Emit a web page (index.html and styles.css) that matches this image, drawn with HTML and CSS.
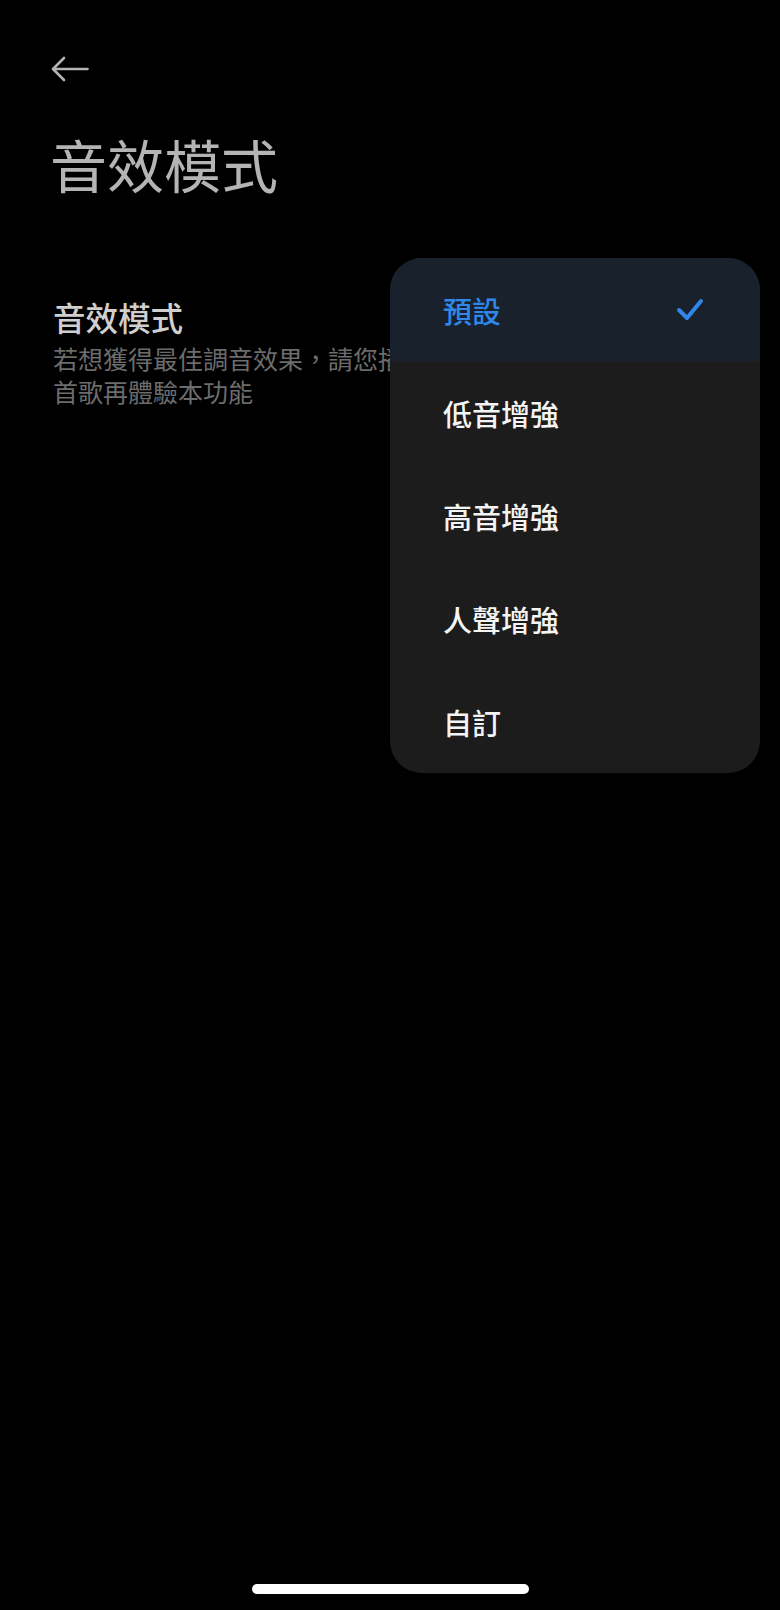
FILE: index.html
```html
<!DOCTYPE html>
<html lang="zh-Hant">
<head>
    <meta charset="UTF-8">
    <meta name="viewport" content="width=device-width, initial-scale=1.0">
    <title>音效模式</title>
    <link rel="stylesheet" href="styles.css">
</head>
<body>
    <div class="screen">
        <div class="top-bar">
            <button class="back-btn" aria-label="返回">
                <svg width="38" height="26" viewBox="0 0 38 26" fill="none" stroke="#b3b3b3" stroke-width="2.6" stroke-linecap="round" stroke-linejoin="round">
                    <path d="M36.5 13H2M13 2L2 13l11 11"/>
                </svg>
            </button>
        </div>
        <h1 class="page-title">音效模式</h1>

        <div class="setting-item">
            <div class="setting-name">音效模式</div>
            <div class="setting-desc">若想獲得最佳調音效果，請您播放一首歌再體驗本功能</div>
        </div>

        <ul class="dropdown">
            <li class="option selected">
                <span>預設</span>
                <svg width="28" height="23" viewBox="0 0 28 23" fill="none" stroke="#2f87ea" stroke-width="4" stroke-linecap="round" stroke-linejoin="round">
                    <path d="M3 12l8 8L25 3"/>
                </svg>
            </li>
            <li class="option"><span>低音增強</span></li>
            <li class="option"><span>高音增強</span></li>
            <li class="option"><span>人聲增強</span></li>
            <li class="option"><span>自訂</span></li>
        </ul>

        <div class="home-indicator"></div>
    </div>
</body>
</html>
```

FILE: styles.css
```css
* {
    box-sizing: border-box;
}
body {
    margin: 0;
    background: #000;
    font-family: "Noto Sans CJK TC", "Noto Sans", sans-serif;
}
.screen {
    position: relative;
    width: 780px;
    height: 1610px;
    display: flex;
    flex-direction: column;
    overflow: hidden;
}
.top-bar {
    padding: 56px 0 0 51px;
    height: 96px;
}
.back-btn {
    background: none;
    border: none;
    padding: 0;
    display: block;
    cursor: pointer;
}
.page-title {
    margin: 39px 0 0 50px;
    font-size: 57px;
    font-weight: 400;
    line-height: 1;
    color: #b4b4b4;
}
.setting-item {
    margin: 105px 0 0 53px;
    width: 410px;
}
.setting-name {
    font-size: 32.5px;
    font-weight: 500;
    line-height: 1.2;
    color: #cfcfcf;
}
.setting-desc {
    margin-top: 6px;
    font-family: "Noto Sans CJK SC", "Noto Sans CJK TC", sans-serif;
    font-size: 25px;
    line-height: 32.5px;
    text-spacing-trim: space-all;
    color: #6c6c6c;
}
.dropdown {
    position: absolute;
    top: 258px;
    left: 390px;
    width: 370px;
    margin: 0;
    padding: 0;
    list-style: none;
    background: #1c1c1c;
    border-radius: 32px;
    overflow: hidden;
}
.option {
    height: 103px;
    padding: 0 56px 0 53px;
    display: flex;
    align-items: center;
    justify-content: space-between;
    font-size: 29px;
    font-weight: 500;
    color: #f4f4f4;
}
.option.selected {
    background: #19222c;
    color: #2f87ea;
}
.home-indicator {
    margin: auto auto 16px;
    width: 277px;
    height: 10px;
    border-radius: 5px;
    background: #fff;
}
```
